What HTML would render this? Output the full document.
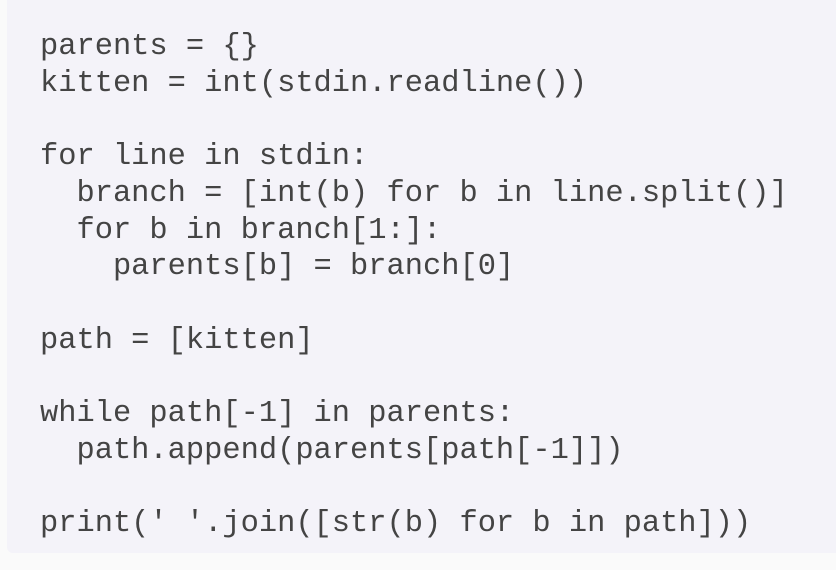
<!DOCTYPE html>
<html><head><style>
html,body{margin:0;padding:0;background:#fafafa;width:836px;height:570px;overflow:hidden}
.box{position:absolute;left:7px;top:0;width:840px;height:553px;background:#f4f3f9;border-radius:0 0 0 6px}
pre{position:absolute;left:40px;top:29px;margin:0;font-family:"Liberation Mono",monospace;font-size:30.4px;line-height:36.7px;color:#444;letter-spacing:0}
</style></head><body>
<div class="box"></div>
<pre>parents = {}
kitten = int(stdin.readline())

for line in stdin:
  branch = [int(b) for b in line.split()]
  for b in branch[1:]:
    parents[b] = branch[0]

path = [kitten]

while path[-1] in parents:
  path.append(parents[path[-1]])

print(' '.join([str(b) for b in path]))</pre>
</body></html>
